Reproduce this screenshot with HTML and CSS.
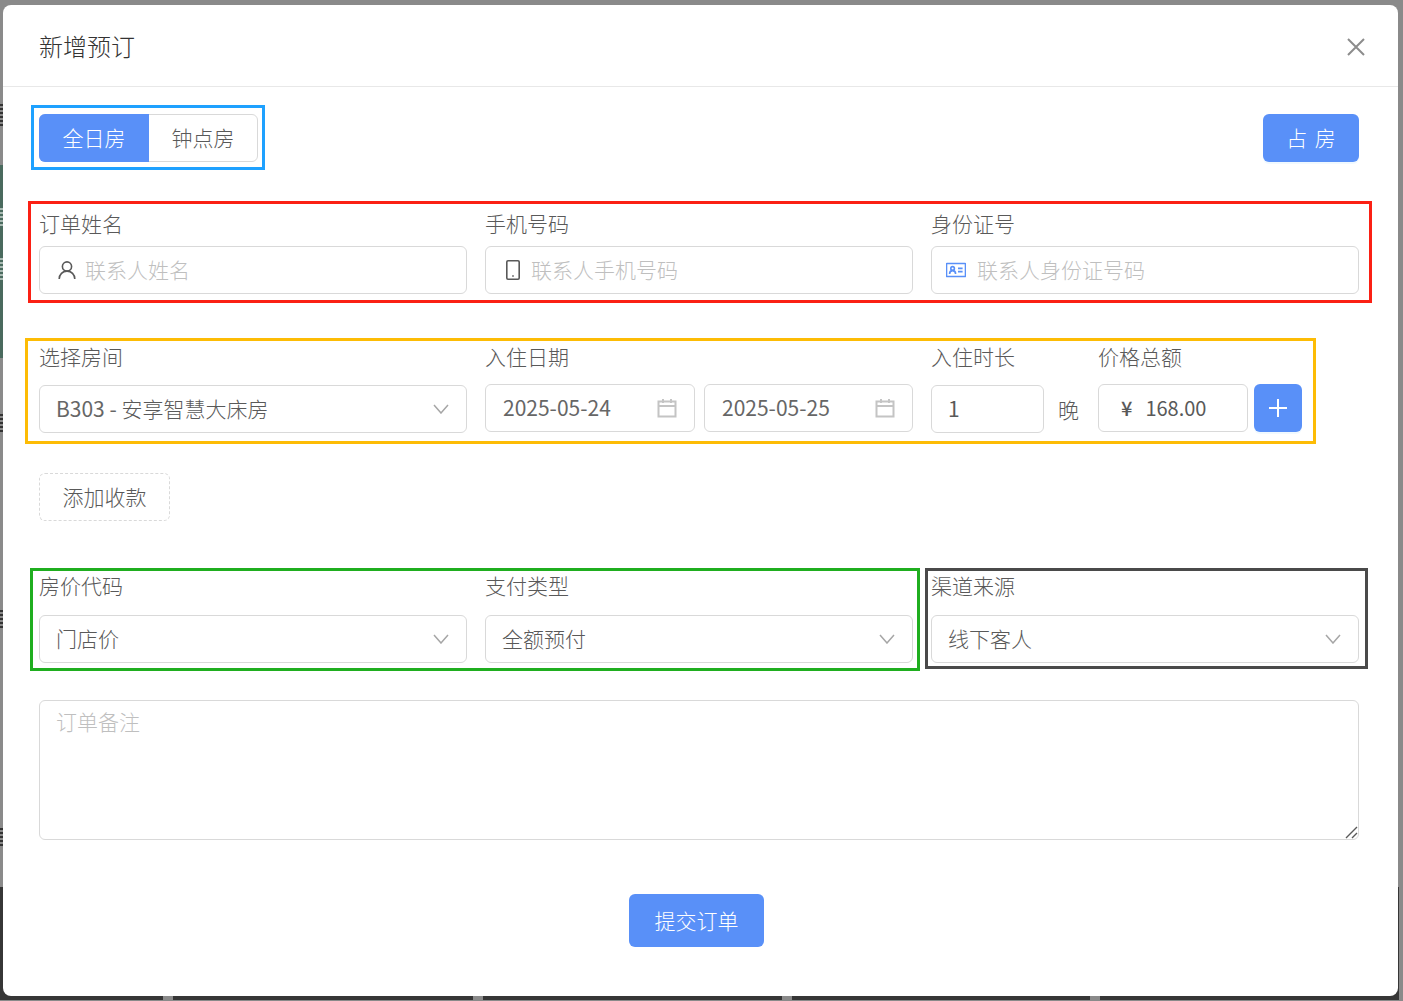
FILE: index.html
```html
<!DOCTYPE html>
<html lang="zh-CN">

<head>
  <meta charset="UTF-8">
  <title>新增预订</title>
  <link rel="stylesheet" href="styles.css">
</head>

<body>
  <div class="modal">
    <div class="modal-header">
      <div class="modal-title">新增预订</div>
      <svg class="close-icon" width="18" height="18" viewBox="0 0 18 18">
        <path d="M1 1L17 17M17 1L1 17" />
      </svg>
    </div>

    <div class="modal-body">
      <div class="top-row">
        <div class="tabs mark mark-blue">
          <div class="tab tab-active">全日房</div>
          <div class="tab">钟点房</div>
        </div>
        <button class="btn btn-occupy">占 房</button>
      </div>

      <div class="form-row row-contact mark mark-red">
        <div class="field">
          <label>订单姓名</label>
          <div class="input">
            <svg class="input-icon" width="20" height="20" viewBox="0 0 20 20">
              <circle cx="10" cy="6.5" r="4.6" />
              <path d="M2.2 19c0-4.6 3.4-7.9 7.8-7.9s7.8 3.3 7.8 7.9" />
            </svg>
            <span class="placeholder">联系人姓名</span>
          </div>
        </div>
        <div class="field">
          <label>手机号码</label>
          <div class="input">
            <svg class="input-icon" width="20" height="20" viewBox="0 0 20 20">
              <rect x="3.8" y="0.8" width="12.4" height="18.4" rx="1.2" />
              <path d="M9.2 16h1.6" />
            </svg>
            <span class="placeholder">联系人手机号码</span>
          </div>
        </div>
        <div class="field">
          <label>身份证号</label>
          <div class="input">
            <svg class="input-icon icon-blue" width="20" height="20" viewBox="0 0 20 20">
              <rect x="0.5" y="3.5" width="19" height="13" rx="0.6" />
              <circle cx="6.6" cy="8.4" r="1.8" />
              <path d="M3.6 14c0-1.9 1.3-3.4 3-3.4s3 1.5 3 3.4M12 8.4h4.6M12 11.6h4.6" />
            </svg>
            <span class="placeholder">联系人身份证号码</span>
          </div>
        </div>
      </div>

      <div class="form-row row-stay mark mark-yellow">
        <div class="field">
          <label>选择房间</label>
          <div class="input input-select input-low">
            <span><span class="latin">B303 - </span>安享智慧大床房</span>
            <svg class="chevron" width="16" height="10" viewBox="0 0 16 10"><path d="M1 1L8 9L15 1" /></svg>
          </div>
        </div>
        <div class="field">
          <label>入住日期</label>
          <div class="date-range">
            <div class="input input-date">
              <span class="latin">2025-05-24</span>
              <svg class="calendar" width="20" height="20" viewBox="0 0 20 20">
                <path d="M1.5 3.5h17v15h-17zM1.5 8h17M6 1v4M14 1v4" />
              </svg>
            </div>
            <div class="input input-date">
              <span class="latin">2025-05-25</span>
              <svg class="calendar" width="20" height="20" viewBox="0 0 20 20">
                <path d="M1.5 3.5h17v15h-17zM1.5 8h17M6 1v4M14 1v4" />
              </svg>
            </div>
          </div>
        </div>
        <div class="field stay-extra">
          <div class="field field-nights">
            <label>入住时长</label>
            <div class="nights">
              <div class="input input-low input-num latin">1</div>
              <span class="nights-unit">晚</span>
            </div>
          </div>
          <div class="field field-price">
            <label>价格总额</label>
            <div class="price">
              <div class="input input-price latin"><span class="yen">¥</span>168.00</div>
              <button class="btn btn-plus">
                <svg width="20" height="20" viewBox="0 0 20 20"><path d="M10 1v18M1 10h18" /></svg>
              </button>
            </div>
          </div>
        </div>
      </div>

      <button class="btn-dashed">添加收款</button>

      <div class="form-row row-pay">
        <div class="mark mark-green"></div>
        <div class="mark mark-dark"></div>
        <div class="field">
          <label>房价代码</label>
          <div class="input input-select">
            <span>门店价</span>
            <svg class="chevron" width="16" height="10" viewBox="0 0 16 10"><path d="M1 1L8 9L15 1" /></svg>
          </div>
        </div>
        <div class="field">
          <label>支付类型</label>
          <div class="input input-select">
            <span>全额预付</span>
            <svg class="chevron" width="16" height="10" viewBox="0 0 16 10"><path d="M1 1L8 9L15 1" /></svg>
          </div>
        </div>
        <div class="field">
          <label>渠道来源</label>
          <div class="input input-select">
            <span>线下客人</span>
            <svg class="chevron" width="16" height="10" viewBox="0 0 16 10"><path d="M1 1L8 9L15 1" /></svg>
          </div>
        </div>
      </div>

      <div class="remark">
        <span class="placeholder">订单备注</span>
        <svg class="resize-grip" width="13" height="13" viewBox="0 0 13 13">
          <path d="M1 12L12 1M7 12L12 7" />
        </svg>
      </div>

      <div class="submit-row">
        <button class="btn btn-submit">提交订单</button>
      </div>
    </div>
  </div>
</body>

</html>
```

FILE: styles.css
```css
html,
body {
  height: 100%;
}

/* the page behind the modal only shows as thin strips round its edge */
body {
  margin: 0;
  height: 1001px;
  box-sizing: border-box;
  padding: 5px 5px 5px 3px;
  overflow: hidden;
  font-family: "Noto Sans CJK SC", "Noto Sans", sans-serif;
  font-weight: 300;
  color: #595959;
  background-color: #8a8a8a;
  background-repeat: no-repeat;
  background-image:
    repeating-linear-gradient(#333 0 2px, transparent 2px 4px),
    repeating-linear-gradient(#333 0 2px, transparent 2px 4px),
    repeating-linear-gradient(#333 0 2px, transparent 2px 4px),
    repeating-linear-gradient(#333 0 2px, transparent 2px 4px),
    repeating-linear-gradient(#a9bab3 0 2px, transparent 2px 4px),
    repeating-linear-gradient(#a9bab3 0 2px, transparent 2px 4px),
    linear-gradient(#4a6a5e, #4a6a5e),
    linear-gradient(to right, #363636 163px, #8a8a8a 163px 173px, #363636 173px 473px, #8a8a8a 473px 483px, #363636 483px 782px, #8a8a8a 782px 792px, #363636 792px 1090px, #8a8a8a 1090px 1100px, #363636 1100px);
  background-position:
    0 104px,
    0 414px,
    0 610px,
    0 828px,
    0 208px,
    0 258px,
    0 165px,
    0 887px;
  background-size:
    3px 24px,
    3px 18px,
    3px 18px,
    3px 20px,
    3px 18px,
    3px 22px,
    3px 193px,
    1399px 113px;
}

.modal {
  height: 991px;
  background: #fff;
  border-radius: 8px;
}

.latin {
  font-weight: 400;
  color: #666;
}

/* --- Header --- */
.modal-header {
  height: 81px;
  padding: 0 33px 0 36px;
  display: flex;
  align-items: center;
  justify-content: space-between;
  border-bottom: 1px solid #e8e8e8;
}

.modal-title {
  font-size: 24px;
  color: #333;
}

.close-icon {
  margin-top: 3px;
  fill: none;
  stroke: #8c8c8c;
  stroke-width: 2;
}

/* --- Body --- */
.modal-body {
  padding: 27px 39px 0 36px;
}

.top-row {
  display: flex;
  justify-content: space-between;
  height: 48px;
}

.tabs {
  display: flex;
  width: 219px;
  height: 48px;
  box-sizing: border-box;
  border: 1px solid #d9d9d9;
  border-radius: 6px;
  font-size: 21px;
}

.tab {
  flex: 1;
  display: flex;
  align-items: center;
  justify-content: center;
  padding-bottom: 2px;
}

.tab-active {
  flex: none;
  width: 110px;
  margin: -1px 0 -1px -1px;
  color: #fff;
  background: #5990f8;
  border-radius: 6px 0 0 6px;
}

.btn {
  border: 0;
  color: #fff;
  background: #5990f8;
  border-radius: 6px;
  font-family: inherit;
  font-weight: 300;
  font-size: 21px;
  padding: 0 0 2px;
}

.btn-occupy {
  width: 96px;
  height: 48px;
  word-spacing: 3px;
  box-shadow: 0 2px 0 rgba(5, 145, 255, 0.06);
}

.form-row {
  display: grid;
  grid-template-columns: repeat(3, 428px);
  column-gap: 18px;
}

.field {
  min-width: 0;
}

.field label {
  display: block;
  font-size: 21px;
  line-height: 30px;
}

.input {
  height: 48px;
  box-sizing: border-box;
  padding: 0 17px 2px;
  display: flex;
  align-items: center;
  border: 1px solid #d9d9d9;
  border-radius: 6px;
  font-size: 21px;
  color: #595959;
  background: #fff;
}

.placeholder {
  color: #bfbfbf;
}

.input-icon {
  flex: none;
  margin: 2px 8px 0 0;
  fill: none;
  stroke: #595959;
  stroke-width: 1.6;
}

.icon-blue {
  stroke: #5990f8;
  margin-left: -3px;
  margin-right: 11px;
}

.row-contact {
  margin-top: 46px;
}

.row-contact .input {
  margin-top: 8px;
}

.row-stay {
  margin-top: 47px;
}

.row-stay .input {
  margin-top: 13px;
}

.row-stay .input-low {
  margin-top: 14px;
}

.input-select {
  justify-content: space-between;
  padding-left: 16px;
}

.chevron {
  flex: none;
  margin: 2px 0 0;
  fill: none;
  stroke: #a6a6a6;
  stroke-width: 1.5;
}

.date-range {
  display: flex;
  gap: 9px;
}

.input-date {
  flex: 1;
  justify-content: space-between;
}

.input-date:first-child {
  flex: 0 0 210px;
}

.calendar {
  flex: none;
  margin-top: 2px;
  fill: none;
  stroke: #c4c4c4;
  stroke-width: 2;
}

.stay-extra {
  display: flex;
  gap: 18px;
}

.field-nights {
  width: 149px;
}

.nights {
  display: flex;
  align-items: center;
}

.input-num {
  width: 113px;
  padding-left: 16px;
}

.nights-unit {
  margin: 14px 0 0 14px;
  font-size: 21px;
}

.price {
  display: flex;
  gap: 6px;
}

.input-price {
  width: 150px;
  padding-left: 22px;
  font-size: 20px;
}

.yen {
  margin-right: 13px;
  font-size: 20px;
  font-weight: 500;
}

.btn-plus {
  width: 48px;
  height: 48px;
  margin-top: 13px;
  padding: 0;
  display: flex;
  align-items: center;
  justify-content: center;
  box-shadow: 0 2px 0 rgba(5, 145, 255, 0.06);
}

.btn-plus svg {
  fill: none;
  stroke: #fff;
  stroke-width: 2;
}

.btn-dashed {
  display: block;
  width: 131px;
  height: 48px;
  margin-top: 40px;
  padding: 0 0 2px;
  background: #fff;
  border: 1px dashed #d9d9d9;
  border-radius: 6px;
  font-family: inherit;
  font-weight: 300;
  font-size: 21px;
  color: #595959;
}

.row-pay {
  position: relative;
  margin-top: 49px;
}

.row-pay .input {
  margin-top: 15px;
}

.remark {
  position: relative;
  height: 140px;
  box-sizing: border-box;
  margin-top: 37px;
  padding: 5px 16px;
  border: 1px solid #d9d9d9;
  border-radius: 6px;
  font-size: 21px;
  line-height: 30px;
}

.resize-grip {
  position: absolute;
  right: 0;
  bottom: 0;
  fill: none;
  stroke: #595959;
  stroke-width: 1.4;
}

.submit-row {
  display: flex;
  justify-content: center;
  margin-top: 54px;
  padding-right: 5px;
}

.btn-submit {
  width: 135px;
  height: 53px;
}

/* --- Coloured outlines drawn over the form --- */
.mark {
  position: relative;
}

.mark::before {
  content: "";
  position: absolute;
  box-sizing: border-box;
  border: 3px solid;
  pointer-events: none;
}

.mark-blue::before {
  left: -9px;
  top: -10px;
  width: 234px;
  height: 65px;
  border-color: #1ea1ff;
}

.mark-red::before {
  left: -11px;
  top: -7px;
  width: 1344px;
  height: 102px;
  border-color: #fb2014;
}

.mark-yellow::before {
  left: -14px;
  top: -3px;
  width: 1291px;
  height: 106px;
  border-color: #fdbc05;
}

.mark-green,
.mark-dark {
  position: absolute;
}

.mark-green::before {
  left: -9px;
  top: -2px;
  width: 890px;
  height: 103px;
  border-color: #1fae1f;
}

.mark-dark::before {
  left: 886px;
  top: -2px;
  width: 443px;
  height: 101px;
  border-color: #4a4a4a;
}
```
